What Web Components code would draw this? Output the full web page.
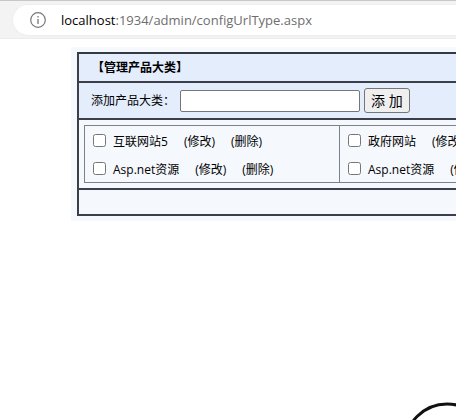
<!DOCTYPE html>
<html lang="zh-CN">
<head>
<meta charset="utf-8">
<title>管理产品大类</title>
<style>
  body{
    margin:0;
    min-height:100vh;
    overflow:hidden;
    background:#fff;
    color:#000;
    font-family:"Open Sans", "Noto Sans CJK SC", sans-serif;
    font-size:12px;
    line-height:16px;
  }
  main{
    padding:8px 0 0 71px;
  }
</style>
</head>
<body>
  <address-bar host="localhost" path=":1934/admin/configUrlType.aspx"></address-bar>
  <main>
    <admin-panel>
      <b slot="title">【管理产品大类】</b>
      <add-form slot="form" label="添加产品大类："></add-form>
      <category-list>
        <category-column>
          <category-item name="互联网站5"></category-item>
          <category-item name="Asp.net资源"></category-item>
        </category-column>
        <category-column>
          <category-item name="政府网站"></category-item>
          <category-item name="Asp.net资源"></category-item>
        </category-column>
      </category-list>
    </admin-panel>
  </main>
  <corner-ring></corner-ring>

<script>
class BaseElement extends HTMLElement {
  constructor() {
    super();
    this.attachShadow({ mode: 'open' });
  }
  connectedCallback() {
    this.shadowRoot.innerHTML = this.template();
  }
}

class AddressBar extends BaseElement {
  template() {
    return `
      <style>
        :host{
          display:block;
          padding:3px 0 2px 12px;
          background:#f3f3f3;
          border-top:1px solid #c8c8c8;
          border-bottom:1px solid #ececec;
        }
        div{
          display:flex;
          align-items:center;
          gap:15px;
          height:30px;
          padding-left:17px;
          background:#fff;
          border:1px solid #eee;
          border-right:0;
          border-radius:16px 0 0 16px;
          color:#6e6e6e;
          font-size:13px;
        }
        b{
          color:#000;
          font-weight:normal;
        }
      </style>
      <div>
        <svg width="16" height="16" viewBox="0 0 16 16" fill="none" stroke="#777">
          <circle cx="8" cy="8" r="7.3" stroke-width="1.2"/>
          <path d="M8 7v5M8 4v1.4" stroke-width="1.3"/>
        </svg>
        <span><b>${this.getAttribute('host')}</b>${this.getAttribute('path')}</span>
      </div>`;
  }
}

class AdminPanel extends BaseElement {
  template() {
    return `
      <style>
        :host{
          display:block;
          padding:5px 0 5px 6px;
          background:#f5f9fe;
          overflow:hidden;
        }
        section{
          border:2px solid #3a3f49;
          border-right:0;
          border-top-color:#333a42;
        }
        section > *{
          display:flow-root;
          border-bottom:2px solid #3a3f49;
        }
        header, .form{
          background:#e3edfc;
        }
        header{
          padding:6px 13px 5px;
        }
        .form{
          padding:5px 12px;
        }
        .list{
          padding:5px 0 5px 5px;
          overflow:hidden;
        }
        footer{
          height:24px;
          border-bottom:0;
        }
      </style>
      <section>
        <header><slot name="title"></slot></header>
        <div class="form"><slot name="form"></slot></div>
        <div class="list"><slot></slot></div>
        <footer></footer>
      </section>`;
  }
}

class AddForm extends BaseElement {
  template() {
    return `
      <style>
        :host{
          display:block;
        }
        form{
          display:flex;
          align-items:center;
          gap:4px;
        }
        label{
          padding-right:1px;
        }
        input{
          box-sizing:border-box;
          width:180px;
          height:22px;
          border:1px solid #767676;
          border-radius:2px;
          background:#fff;
        }
        button{
          height:25px;
          padding:0 6px;
          border:1px solid #767676;
          border-radius:3px;
          background:#efefef;
          color:#000;
          font-family:inherit;
          font-size:14px;
          line-height:20px;
        }
      </style>
      <form onsubmit="return false">
        <label for="name">${this.getAttribute('label')}</label>
        <input id="name" type="text">
        <button type="submit">添 加</button>
      </form>`;
  }
}

class CategoryList extends BaseElement {
  template() {
    return `
      <style>
        :host{
          display:grid;
          grid-template-columns:repeat(2, 255px);
          width:max-content;
          border:1px solid #7c828c;
        }
      </style>
      <slot></slot>`;
  }
}

class CategoryColumn extends BaseElement {
  template() {
    return `
      <style>
        :host{
          display:block;
          border-right:1px solid #7c828c;
        }
      </style>
      <slot></slot>`;
  }
}

class CategoryItem extends BaseElement {
  template() {
    return `
      <style>
        :host{
          display:flex;
          align-items:center;
          gap:16px;
          height:28px;
          padding-left:8px;
          white-space:nowrap;
        }
        label{
          display:flex;
          align-items:center;
          gap:7px;
        }
        input{
          width:13px;
          height:13px;
          margin:0;
        }
        span, a{
          padding-top:4px;
        }
        a{
          color:#000;
          text-decoration:none;
        }
      </style>
      <label><input type="checkbox"><span>${this.getAttribute('name')}</span></label>
      <a href="#edit">(修改)</a>
      <a href="#delete">(删除)</a>`;
  }
}

// round outline resting in the bottom right corner
class CornerRing extends BaseElement {
  template() {
    return `
      <style>
        :host{
          position:fixed;
          right:0;
          bottom:0;
          line-height:0;
        }
      </style>
      <svg width="56" height="20" viewBox="0 0 56 20">
        <circle cx="47" cy="46" r="42" fill="none" stroke="#111" stroke-width="3"/>
      </svg>`;
  }
}

customElements.define('address-bar', AddressBar);
customElements.define('admin-panel', AdminPanel);
customElements.define('add-form', AddForm);
customElements.define('category-list', CategoryList);
customElements.define('category-column', CategoryColumn);
customElements.define('category-item', CategoryItem);
customElements.define('corner-ring', CornerRing);
</script>
</body>
</html>
